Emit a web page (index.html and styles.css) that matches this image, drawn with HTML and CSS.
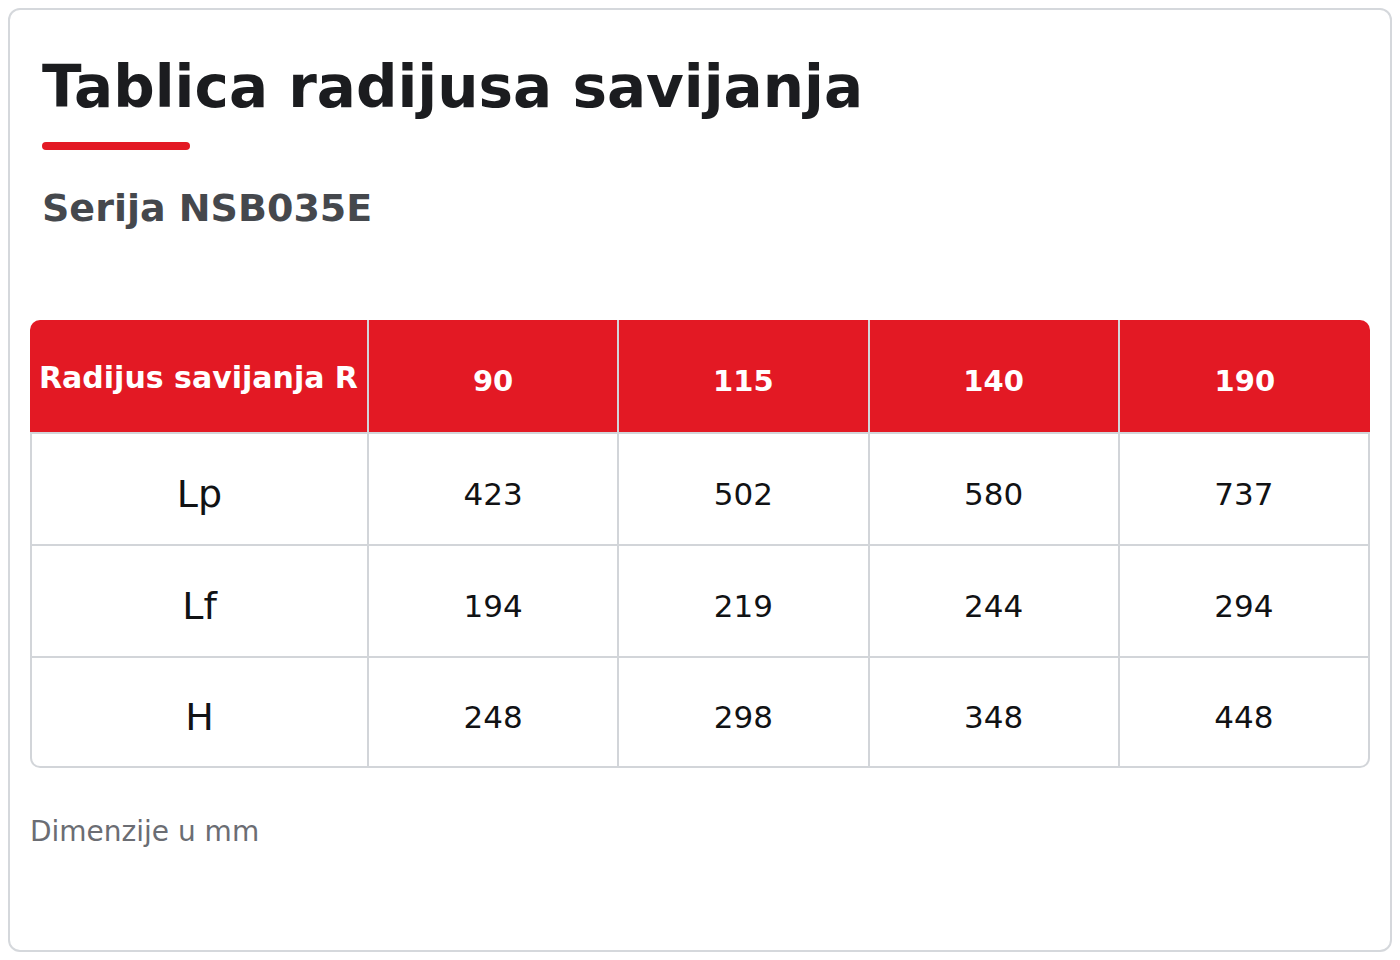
FILE: index.html
```html
<!DOCTYPE html>
<html lang="hr">
<head>
<meta charset="utf-8">
<title>Tablica radijusa savijanja</title>
<link rel="stylesheet" href="styles.css">
</head>
<body>
<div class="card">
  <header class="head">
    <h1 class="title">Tablica radijusa savijanja</h1>
    <div class="accent"></div>
    <h2 class="subtitle">Serija NSB035E</h2>
  </header>
  <table class="radius-table">
    <colgroup>
      <col class="col-label">
      <col><col><col><col>
    </colgroup>
    <thead>
      <tr>
        <th class="th-label">Radijus savijanja R</th>
        <th>90</th>
        <th>115</th>
        <th>140</th>
        <th>190</th>
      </tr>
    </thead>
    <tbody>
      <tr>
        <td class="row-label">Lp</td>
        <td>423</td><td>502</td><td>580</td><td>737</td>
      </tr>
      <tr>
        <td class="row-label">Lf</td>
        <td>194</td><td>219</td><td>244</td><td>294</td>
      </tr>
      <tr>
        <td class="row-label">H</td>
        <td>248</td><td>298</td><td>348</td><td>448</td>
      </tr>
    </tbody>
  </table>
  <p class="note">Dimenzije u mm</p>
</div>
</body>
</html>
```

FILE: styles.css
```css
html, body {
  margin: 0;
  padding: 0;
  background: #ffffff;
}

body {
  padding: 8px;
  font-family: "DejaVu Sans", sans-serif;
  box-sizing: border-box;
  height: 100vh;
}

.card {
  box-sizing: border-box;
  height: 100%;
  border: 2px solid #d5d8dc;
  border-radius: 12px;
  padding: 20px;
  background: #ffffff;
}

.head {
  padding: 23px 12px 0;
}

.title {
  margin: 0;
  font-size: 58px;
  line-height: 68px;
  font-weight: 700;
  color: #1b1c1f;
}

.accent {
  width: 148px;
  height: 8px;
  border-radius: 4px;
  background: #e31924;
  margin-top: 21px;
}

.subtitle {
  margin: 36px 0 0;
  font-size: 38px;
  line-height: 44px;
  font-weight: 700;
  color: #45484d;
}

.radius-table {
  margin-top: 90px;
  width: 100%;
  table-layout: fixed;
  border-collapse: separate;
  border-spacing: 0;
}

.col-label {
  width: 339px;
}

.radius-table th {
  height: 112px;
  box-sizing: border-box;
  padding: 10px 4px 0;
  background: #e31924;
  color: #ffffff;
  font-size: 29px;
  font-weight: 700;
  text-align: center;
  vertical-align: middle;
  border-right: 2px solid #d2d5d9;
}

.radius-table th:last-child {
  border-right: none;
  border-top-right-radius: 10px;
}

.radius-table th.th-label {
  font-size: 30px;
  padding: 2px 2px 0;
  white-space: nowrap;
  border-top-left-radius: 10px;
}

.radius-table td {
  height: 112px;
  box-sizing: border-box;
  padding: 10px 4px 0;
  text-align: center;
  vertical-align: middle;
  font-size: 31px;
  color: #111214;
  border-top: 2px solid #d2d5d9;
  border-right: 2px solid #d2d5d9;
}

.radius-table td.row-label {
  font-size: 38px;
  border-left: 2px solid #d2d5d9;
}

.radius-table tbody tr:last-child td {
  border-bottom: 2px solid #d2d5d9;
}

.radius-table tbody tr:last-child td:first-child {
  border-bottom-left-radius: 10px;
}

.radius-table tbody tr:last-child td:last-child {
  border-bottom-right-radius: 10px;
}

.note {
  margin: 47px 0 0;
  font-size: 28px;
  line-height: 34px;
  color: #6b6d73;
}
```
